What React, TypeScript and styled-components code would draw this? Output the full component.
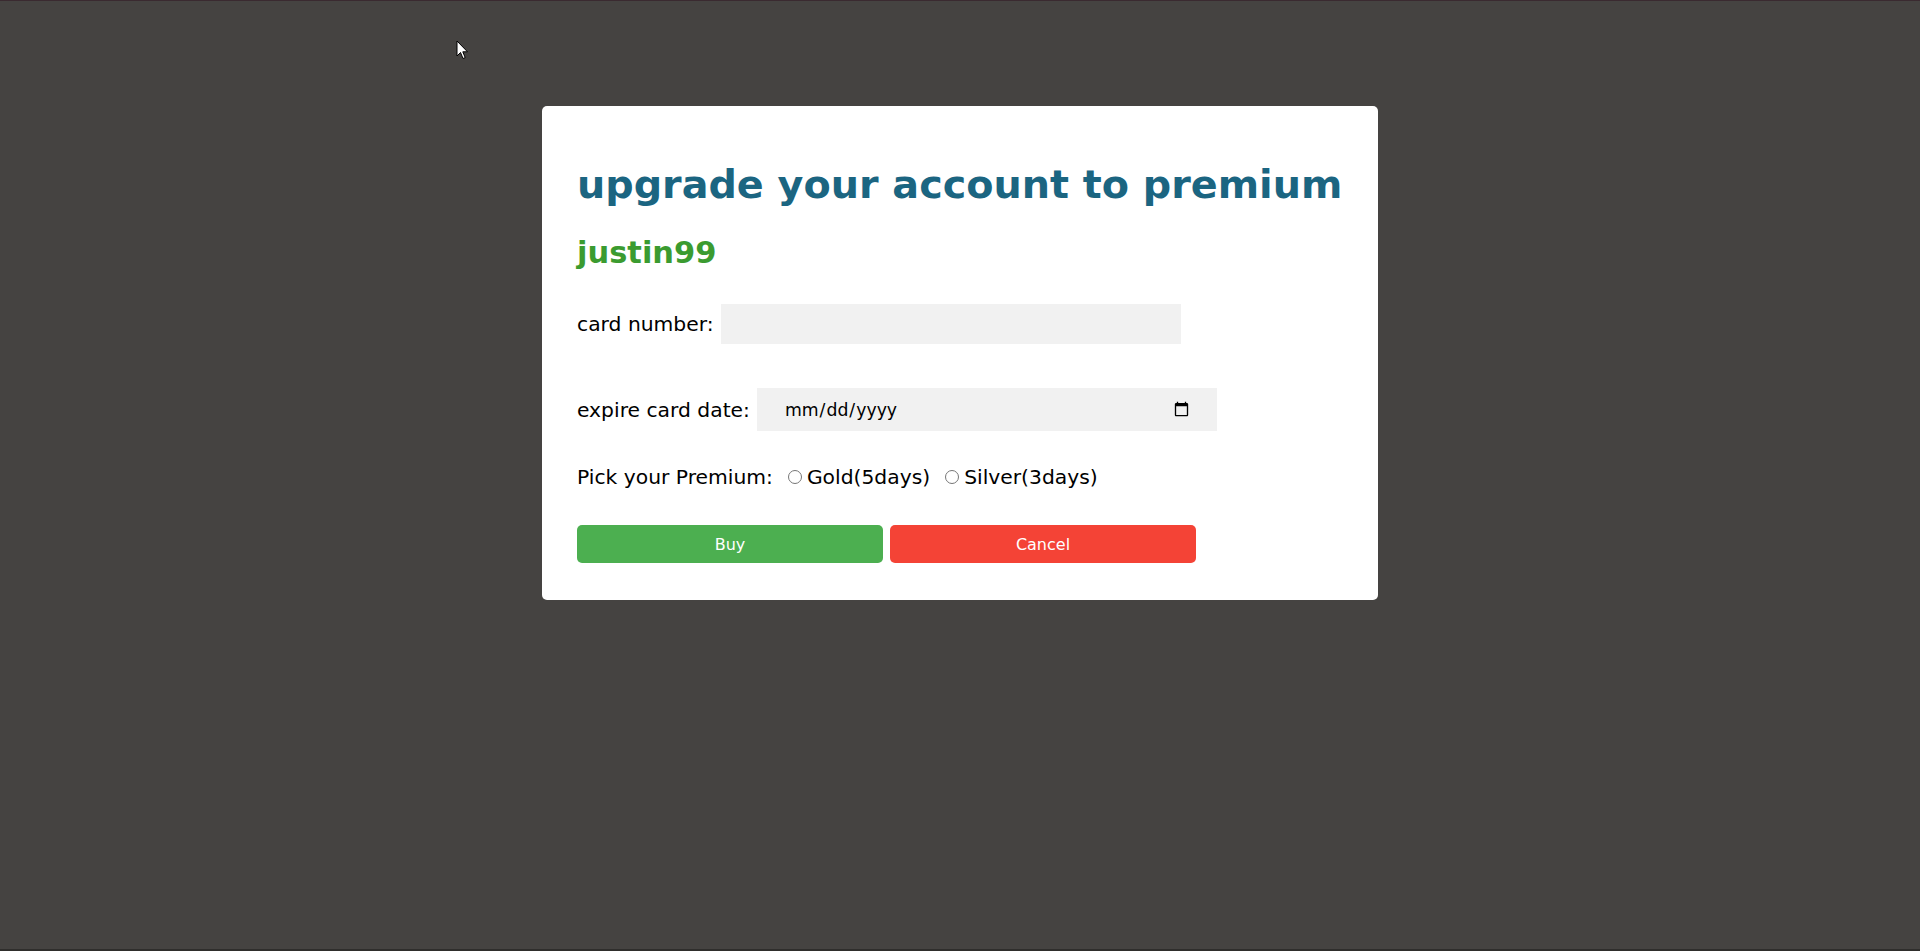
import React from "react";
import styled, { createGlobalStyle } from "styled-components";

const GlobalStyle = createGlobalStyle`
  html, body {
    margin: 0;
    padding: 0;
    height: 100%;
  }
  body {
    background: #454341;
    font-family: "DejaVu Sans", Verdana, sans-serif;
    overflow: hidden;
  }
  #root {
    min-height: 100%;
  }
`;

const Page = styled.div`
  position: relative;
  height: 951px;
  box-sizing: border-box;
  border-top: 1px solid #3a2a30;
  border-bottom: 2px solid #2f2e2c;
  display: flex;
  flex-direction: column;
  align-items: center;
  padding-top: 105px;
`;

const Modal = styled.div`
  width: 836px;
  box-sizing: border-box;
  background: #ffffff;
  border-radius: 5px;
  padding: 55px 35px 37px 35px;
  display: flex;
  flex-direction: column;
`;

const Title = styled.h1`
  margin: 0;
  font-size: 39.7px;
  line-height: 46px;
  font-weight: bold;
  color: #1b6581;
  white-space: nowrap;
`;

const UserName = styled.h2`
  margin: 28px 0 0 0;
  font-size: 30.5px;
  line-height: 35px;
  font-weight: bold;
  color: #3b9b30;
`;

const FieldRow = styled.div<{ $top: number }>`
  display: flex;
  align-items: center;
  margin-top: ${(p) => p.$top}px;
`;

const Label = styled.label`
  font-size: 20.3px;
  line-height: 24px;
  color: #000;
  white-space: nowrap;
`;

const Field = styled.input<{ $h: number }>`
  width: 460px;
  height: ${(p) => p.$h}px;
  box-sizing: border-box;
  border: none;
  outline: none;
  background: #f1f1f1;
  margin-left: 7px;
  padding: 0 25px 0 27px;
  font-family: "DejaVu Sans", Verdana, sans-serif;
  font-size: 17.3px;
  color: #000;
`;

const OptionRow = styled.div`
  display: flex;
  align-items: center;
  margin-top: 34px;
`;

const Option = styled.label`
  display: flex;
  align-items: center;
  gap: 5px;
  margin-left: 15px;
  font-size: 20.3px;
  line-height: 24px;
  color: #000;
  white-space: nowrap;
`;

const Radio = styled.input`
  width: 14px;
  height: 14px;
  margin: 0;
`;

const ButtonRow = styled.div`
  display: flex;
  gap: 7px;
  margin-top: 36px;
`;

const Button = styled.button<{ $bg: string }>`
  width: 306px;
  height: 38px;
  border: none;
  border-radius: 5px;
  background: ${(p) => p.$bg};
  color: #ffffff;
  font-family: "DejaVu Sans", Verdana, sans-serif;
  font-size: 16px;
  cursor: pointer;
`;

const Cursor = styled.svg`
  position: absolute;
  left: 456px;
  top: 39px;
`;

export default function App() {
  return (
    <>
      <GlobalStyle />
      <Page>
        <Cursor width="13" height="20" viewBox="0 0 13 20">
          <path
            d="M1 1 L1 16 L4.5 12.5 L7 18.5 L9.2 17.6 L6.8 11.8 L11.5 11.8 Z"
            fill="#ffffff"
            stroke="#000000"
            strokeWidth="1"
            strokeLinejoin="round"
          />
        </Cursor>
        <Modal>
          <Title>upgrade your account to premium</Title>
          <UserName>justin99</UserName>
          <FieldRow $top={34}>
            <Label htmlFor="card">card number:</Label>
            <Field id="card" type="text" $h={40} />
          </FieldRow>
          <FieldRow $top={44}>
            <Label htmlFor="expire">expire card date:</Label>
            <Field id="expire" type="date" $h={43} />
          </FieldRow>
          <OptionRow>
            <Label>Pick your Premium:</Label>
            <Option>
              <Radio type="radio" name="premium" />
              Gold(5days)
            </Option>
            <Option>
              <Radio type="radio" name="premium" />
              Silver(3days)
            </Option>
          </OptionRow>
          <ButtonRow>
            <Button $bg="#4caf50">Buy</Button>
            <Button $bg="#f44336">Cancel</Button>
          </ButtonRow>
        </Modal>
      </Page>
    </>
  );
}
